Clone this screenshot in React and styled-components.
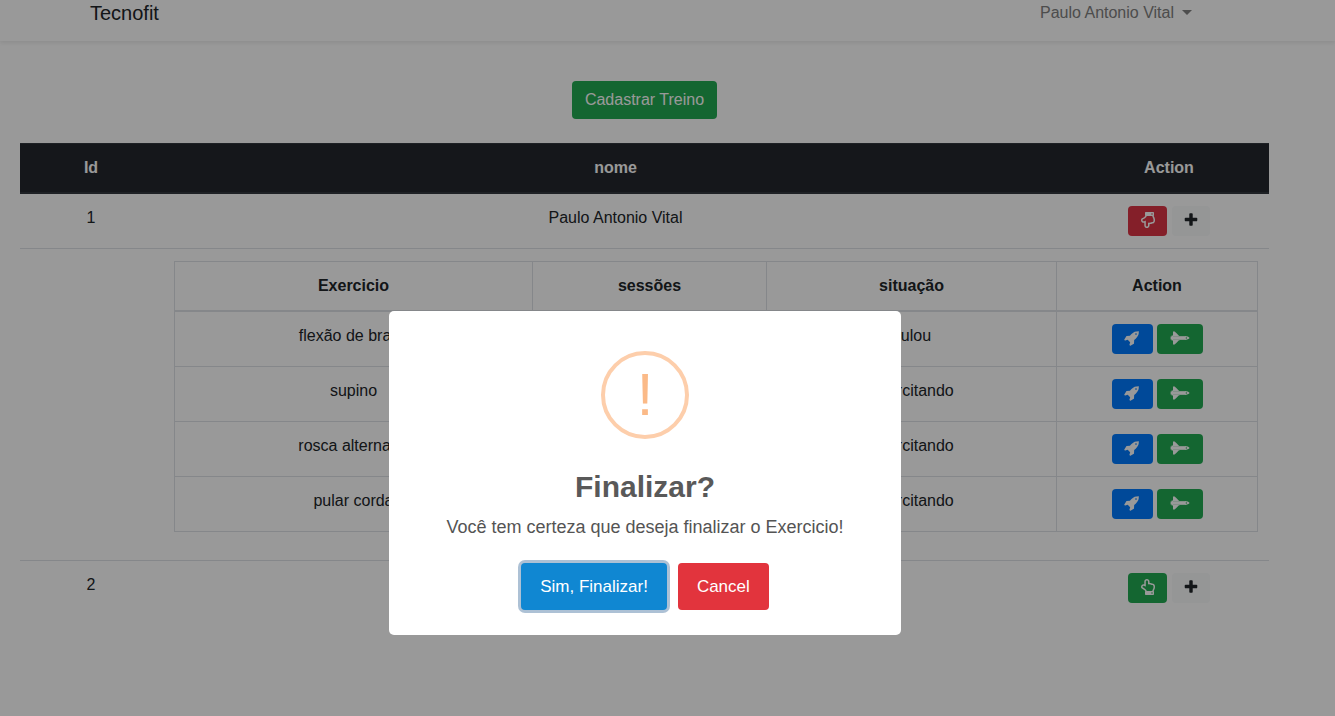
import React from "react";
import styled, { createGlobalStyle, css } from "styled-components";
import { FaRegHandPointDown, FaRegHandPointUp } from "react-icons/fa";

const GlobalStyle = createGlobalStyle`
  *, *::before, *::after { box-sizing: border-box; }
  body {
    margin: 0;
    background: #fff;
    color: #212529;
    font-family: "Liberation Sans", Arial, sans-serif;
    font-size: 16px;
    line-height: 24px;
  }
  button { font-family: inherit; cursor: pointer; }
`;

const Navbar = styled.nav`
  padding: 0 45px 16px 0;
  background: #fff;
  box-shadow: 0 2px 4px rgba(0, 0, 0, 0.08);
`;

const NavContainer = styled.div`
  display: flex;
  align-items: center;
  justify-content: space-between;
  max-width: 1140px;
  height: 25px;
  margin: 0 auto;
  padding: 0 15px;
`;

const Brand = styled.a`
  color: #212529;
  font-size: 20px;
  text-decoration: none;
`;

const UserMenu = styled.button`
  display: flex;
  align-items: center;
  gap: 8px;
  padding: 0 8px;
  border: 0;
  background: none;
  color: #808080;
  font-size: 16px;
  line-height: 24px;
`;

const Caret = styled.span`
  border-top: 5px solid currentColor;
  border-right: 5px solid transparent;
  border-left: 5px solid transparent;
`;

const Main = styled.main`
  display: flex;
  flex-direction: column;
  align-items: center;
  gap: 24px;
  padding: 40px 66px 24px 20px;
`;

const tones = {
  green: css`
    background: #22aa52;
    color: #fff;
  `,
  red: css`
    background: #dc3545;
    color: #fff;
  `,
  blue: css`
    background: #007bff;
    color: #fff;
  `,
  light: css`
    background: #f8fafb;
    color: #212529;
  `,
};

const Button = styled.button`
  padding: 7px 13px;
  border: 0;
  border-radius: 4px;
  font-size: 16px;
  line-height: 24px;
  ${({ $tone }) => tones[$tone]}
`;

const IconButton = styled.button`
  display: flex;
  align-items: center;
  justify-content: center;
  width: ${({ $width }) => $width}px;
  height: 30px;
  padding: 0 0 2px;
  border: 0;
  border-radius: 4px;
  font-size: 16px;
  ${({ $tone }) => tones[$tone]}
`;

const Actions = styled.div`
  display: flex;
  justify-content: center;
  gap: ${({ $gap }) => $gap || 4}px;
`;

const Table = styled.table`
  width: 100%;
  border-collapse: collapse;
  table-layout: fixed;
  text-align: center;
`;

const Col = styled.col`
  width: ${({ $width }) => ($width ? `${$width}px` : "auto")};
`;

const HeadCell = styled.th`
  padding: 12px;
  border-top: 1px solid #32383e;
  border-bottom: 2px solid #32383e;
  background: #24272d;
  color: #fff;
`;

const Cell = styled.td`
  padding: 12px;
  border-top: 1px solid #dee2e6;
  vertical-align: top;
`;

const InnerTable = styled(Table)`
  margin-bottom: 16px;
`;

const InnerHeadCell = styled.th`
  padding: 12px;
  border: 1px solid #dee2e6;
  border-bottom-width: 2px;
`;

const InnerCell = styled.td`
  padding: 12px;
  border: 1px solid #dee2e6;
  vertical-align: top;
`;

const Backdrop = styled.div`
  position: fixed;
  inset: 0;
  display: flex;
  align-items: center;
  justify-content: center;
  padding: 230px 45px 0 0;
  background: rgba(0, 0, 0, 0.4);
`;

const Dialog = styled.div`
  display: flex;
  flex-direction: column;
  align-items: center;
  width: 512px;
  max-width: 100%;
  padding: 40px 20px 25px;
  border-radius: 5px;
  background: #fff;
  text-align: center;
`;

const WarningIcon = styled.div`
  display: flex;
  align-items: center;
  justify-content: center;
  width: 88px;
  height: 88px;
  margin-bottom: 30px;
  border: 4px solid #fdceab;
  border-radius: 50%;
  color: #fbba88;
  font-size: 60px;
  line-height: 80px;
`;

const DialogTitle = styled.h2`
  margin: 0 0 10px;
  color: #595959;
  font-size: 30px;
  line-height: 36px;
`;

const DialogText = styled.p`
  margin: 0 0 24px;
  color: #545454;
  font-size: 18px;
  line-height: 24px;
`;

const DialogButton = styled.button`
  height: 47px;
  padding: 0 19px;
  border: 0;
  border-radius: 4px;
  background: ${({ $danger }) => ($danger ? "#e2343d" : "#1087d2")};
  box-shadow: ${({ $danger }) => ($danger ? "none" : "0 0 0 3px rgba(50, 100, 150, 0.4)")};
  color: #fff;
  font-size: 17px;
`;

const exercises = [
  { name: "flexão de braço", status: "pulou" },
  { name: "supino", status: "Exercitando" },
  { name: "rosca alternada", status: "Exercitando" },
  { name: "pular corda", status: "Exercitando" },
];

function PlusIcon() {
  return (
    <svg width="16" height="16" viewBox="0 0 1792 1792" fill="currentColor" aria-hidden="true">
      <path d="M1600 736v192q0 40-28 68t-68 28h-416v416q0 40-28 68t-68 28h-192q-40 0-68-28t-28-68v-416h-416q-40 0-68-28t-28-68v-192q0-40 28-68t68-28h416v-416q0-40 28-68t68-28h192q40 0 68 28t28 68v416h416q40 0 68 28t28 68z" />
    </svg>
  );
}

function RocketIcon() {
  return (
    <svg width="16" height="16" viewBox="0 0 1792 1792" fill="currentColor" aria-hidden="true">
      <path d="M1440 448q0-40-28-68t-68-28-68 28-28 68 28 68 68 28 68-28 28-68zm224-288q0 249-75.5 430.5t-253.5 360.5q-81 80-195 176l-20 379q-2 16-16 26l-384 224q-7 4-16 4-12 0-23-9l-64-64q-13-14-8-32l85-276-281-281-276 85q-3 1-9 1-14 0-23-9l-64-64q-17-19-5-39l224-384q10-14 26-16l379-20q96-114 176-195 188-187 358-258t431-71q14 0 24 9.5t10 22.5z" />
    </svg>
  );
}

function ShuttleIcon() {
  return (
    <svg width="20" height="14" viewBox="0 0 20 14" fill="currentColor" aria-hidden="true">
      <path d="M3 .4h1.1c.8 0 1.4.6 2.2 1.5l2.4 2.5c.4.4.9.6 1.5.6H15c2 .1 4 .9 4.6 2-.6 1.100-2.600 1.900-4.600 2h-4.800c-.6 0-1.100.2-1.500.6l-2.400 2.500c-.8.9-1.400 1.500-2.200 1.500H3V9.500H1.600V8.400H.6V5.600h1V4.500H3z" />
      <path d="M3 5.500h12M3 8.500h12" stroke="#22aa52" strokeOpacity=".35" strokeWidth=".5" />
      <path d="M16.300 6v2" stroke="#22aa52" strokeWidth=".7" />
    </svg>
  );
}

function TrainingActions({ open }) {
  return (
    <Actions $gap={5}>
      <IconButton
        $tone={open ? "red" : "green"}
        $width={39}
        aria-label={open ? "Fechar treino" : "Abrir treino"}
      >
        {open ? <FaRegHandPointDown /> : <FaRegHandPointUp />}
      </IconButton>
      <IconButton $tone="light" $width={38} aria-label="Adicionar exercicio">
        <PlusIcon />
      </IconButton>
    </Actions>
  );
}

function ExerciseTable() {
  return (
    <InnerTable>
      <colgroup>
        <Col $width={358} />
        <Col $width={234} />
        <Col $width={290} />
        <Col $width={201} />
      </colgroup>
      <thead>
        <tr>
          <InnerHeadCell>Exercicio</InnerHeadCell>
          <InnerHeadCell>sessões</InnerHeadCell>
          <InnerHeadCell>situação</InnerHeadCell>
          <InnerHeadCell>Action</InnerHeadCell>
        </tr>
      </thead>
      <tbody>
        {exercises.map(({ name, status }) => (
          <tr key={name}>
            <InnerCell>{name}</InnerCell>
            <InnerCell />
            <InnerCell>{status}</InnerCell>
            <InnerCell>
              <Actions>
                <IconButton $tone="blue" $width={41} aria-label="Finalizar">
                  <RocketIcon />
                </IconButton>
                <IconButton $tone="green" $width={46} aria-label="Pular">
                  <ShuttleIcon />
                </IconButton>
              </Actions>
            </InnerCell>
          </tr>
        ))}
      </tbody>
    </InnerTable>
  );
}

export default function App() {
  return (
    <>
      <GlobalStyle />
      <Navbar>
        <NavContainer>
          <Brand href="#">Tecnofit</Brand>
          <UserMenu>
            Paulo Antonio Vital
            <Caret />
          </UserMenu>
        </NavContainer>
      </Navbar>
      <Main>
        <Button $tone="green">Cadastrar Treino</Button>
        <Table>
          <colgroup>
            <Col $width={142} />
            <Col />
            <Col $width={200} />
          </colgroup>
          <thead>
            <tr>
              <HeadCell>Id</HeadCell>
              <HeadCell>nome</HeadCell>
              <HeadCell>Action</HeadCell>
            </tr>
          </thead>
          <tbody>
            <tr>
              <Cell>1</Cell>
              <Cell>Paulo Antonio Vital</Cell>
              <Cell>
                <TrainingActions open />
              </Cell>
            </tr>
            <tr>
              <Cell />
              <Cell colSpan={2}>
                <ExerciseTable />
              </Cell>
            </tr>
            <tr>
              <Cell>2</Cell>
              <Cell />
              <Cell>
                <TrainingActions />
              </Cell>
            </tr>
          </tbody>
        </Table>
      </Main>
      <Backdrop>
        <Dialog role="dialog" aria-modal="true" aria-labelledby="dialog-title" aria-describedby="dialog-text">
          <WarningIcon>!</WarningIcon>
          <DialogTitle id="dialog-title">Finalizar?</DialogTitle>
          <DialogText id="dialog-text">Você tem certeza que deseja finalizar o Exercicio!</DialogText>
          <Actions $gap={11}>
            <DialogButton>Sim, Finalizar!</DialogButton>
            <DialogButton $danger>Cancel</DialogButton>
          </Actions>
        </Dialog>
      </Backdrop>
    </>
  );
}
